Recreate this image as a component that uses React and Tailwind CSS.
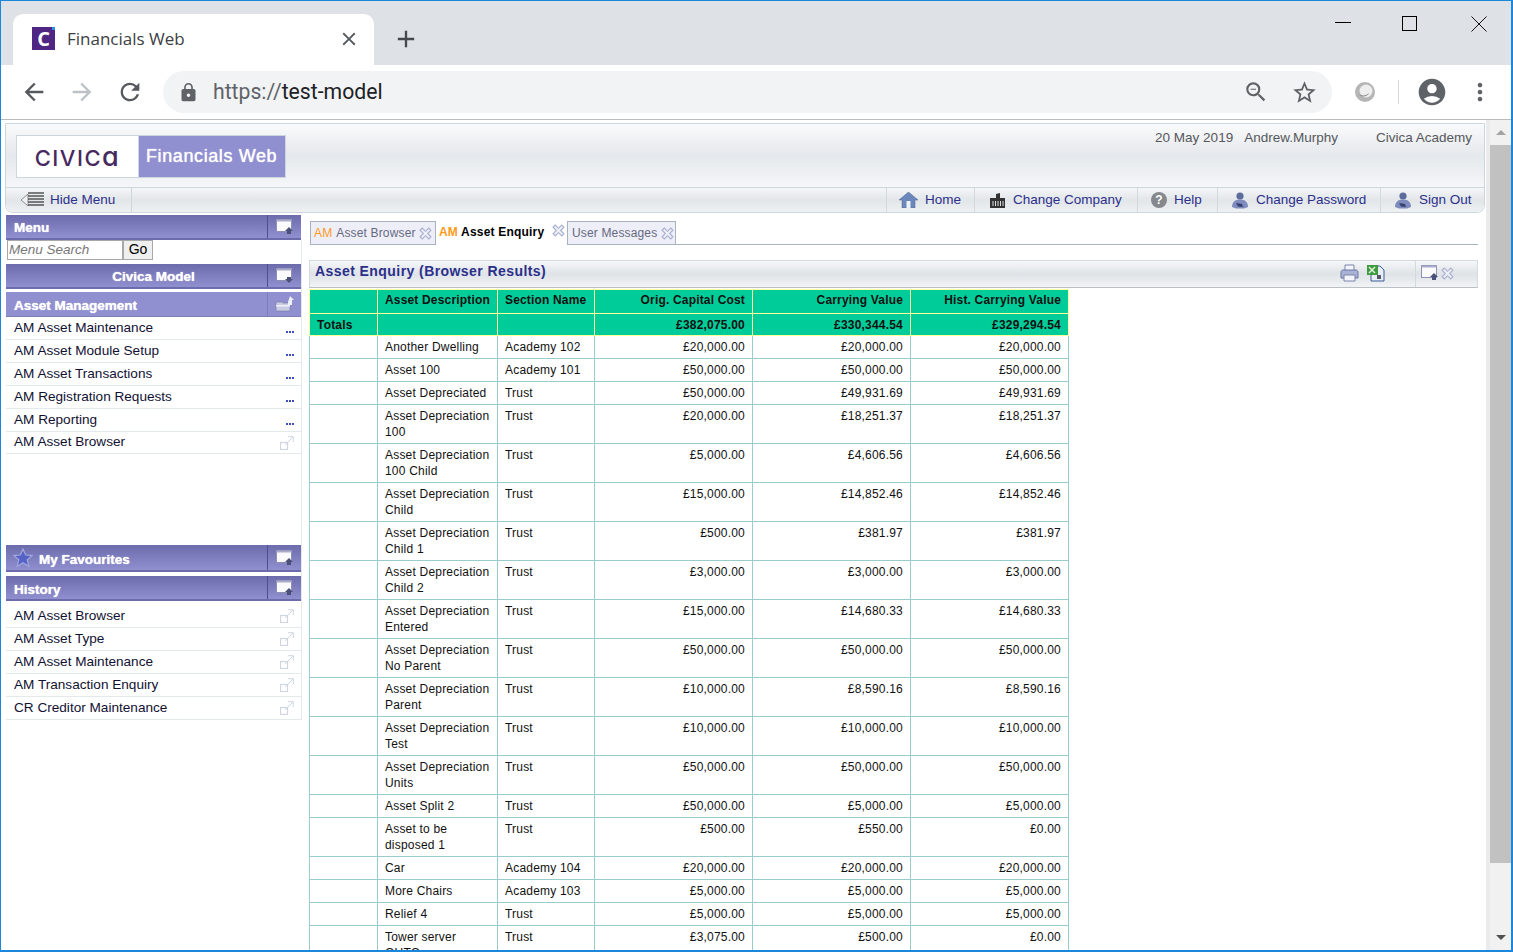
import { MdArrowBack, MdArrowForward, MdRefresh, MdLock, MdStarBorder, MdAccountCircle, MdMoreVert, MdZoomOut, MdClose, MdAdd } from "react-icons/md";

const rows = [
  ["Another Dwelling", "Academy 102", "£20,000.00", "£20,000.00", "£20,000.00"],
  ["Asset 100", "Academy 101", "£50,000.00", "£50,000.00", "£50,000.00"],
  ["Asset Depreciated", "Trust", "£50,000.00", "£49,931.69", "£49,931.69"],
  ["Asset Depreciation\n100", "Trust", "£20,000.00", "£18,251.37", "£18,251.37"],
  ["Asset Depreciation\n100 Child", "Trust", "£5,000.00", "£4,606.56", "£4,606.56"],
  ["Asset Depreciation\nChild", "Trust", "£15,000.00", "£14,852.46", "£14,852.46"],
  ["Asset Depreciation\nChild 1", "Trust", "£500.00", "£381.97", "£381.97"],
  ["Asset Depreciation\nChild 2", "Trust", "£3,000.00", "£3,000.00", "£3,000.00"],
  ["Asset Depreciation\nEntered", "Trust", "£15,000.00", "£14,680.33", "£14,680.33"],
  ["Asset Depreciation\nNo Parent", "Trust", "£50,000.00", "£50,000.00", "£50,000.00"],
  ["Asset Depreciation\nParent", "Trust", "£10,000.00", "£8,590.16", "£8,590.16"],
  ["Asset Depreciation\nTest", "Trust", "£10,000.00", "£10,000.00", "£10,000.00"],
  ["Asset Depreciation\nUnits", "Trust", "£50,000.00", "£50,000.00", "£50,000.00"],
  ["Asset Split 2", "Trust", "£50,000.00", "£5,000.00", "£5,000.00"],
  ["Asset to be\ndisposed 1", "Trust", "£500.00", "£550.00", "£0.00"],
  ["Car", "Academy 104", "£20,000.00", "£20,000.00", "£20,000.00"],
  ["More Chairs", "Academy 103", "£5,000.00", "£5,000.00", "£5,000.00"],
  ["Relief 4", "Trust", "£5,000.00", "£5,000.00", "£5,000.00"],
  ["Tower server\nOUTO", "Trust", "£3,075.00", "£500.00", "£0.00"],
];

const menuItems = ["AM Asset Maintenance", "AM Asset Module Setup", "AM Asset Transactions", "AM Registration Requests", "AM Reporting"];
const historyItems = ["AM Asset Browser", "AM Asset Type", "AM Asset Maintenance", "AM Transaction Enquiry", "CR Creditor Maintenance"];

function WindowIcon({ down }) {
  return (
    <svg width="18" height="16" viewBox="0 0 18 16">
      <rect x="0.5" y="0.5" width="15" height="12" fill="#fbfbfe" stroke="#8d90b4" />
      <rect x="0.5" y="0.5" width="15" height="2" fill="#a9abc8" />
      {down ? (
        <path d="M11 9h4v2h2l-4 4-4-4h2z" fill="#4a5078" />
      ) : (
        <path d="M13 8l4 4h-2v3h-4v-3H9z" fill="#4a5078" />
      )}
    </svg>
  );
}

function FolderUp() {
  return (
    <svg width="20" height="16" viewBox="0 0 20 16">
      <path d="M1 6h6l1 1h7v8H1z" fill="#c9cbe2" stroke="#7d80ad" strokeWidth="0.7" />
      <rect x="1" y="9" width="14" height="1.5" fill="#eef0f6" />
      <path d="M15 0l4 4h-2v5h-4V6z" fill="#eef0f8" />
    </svg>
  );
}

function LinkIcon() {
  return (
    <svg width="14" height="14" viewBox="0 0 14 14" fill="none" stroke="#cfd6e2" strokeWidth="1">
      <rect x="0.5" y="6.5" width="7" height="7" strokeWidth="1.2" />
      <path d="M5 9l8-8M8 0.7h5.3V6" />
    </svg>
  );
}

function Dots() {
  return (
    <div className="flex gap-[1px] mt-[8px]">
      <span className="w-[2px] h-[2px] bg-[#3f51c0]" />
      <span className="w-[2px] h-[2px] bg-[#3f51c0]" />
      <span className="w-[2px] h-[2px] bg-[#3f51c0]" />
    </div>
  );
}

function CrossIcon({ className }) {
  return (
    <svg width="13" height="13" viewBox="0 0 12 12" className={`shrink-0 ${className || ""}`}>
      <path d="M1 3l2-2 3 3 3-3 2 2-3 3 3 3-2 2-3-3-3 3-2-2 3-3z" fill="#eef0f8" stroke="#a9afcf" strokeWidth="1" />
    </svg>
  );
}

function PersonIcon() {
  return (
    <svg width="18" height="18" viewBox="0 0 18 18">
      <circle cx="9" cy="5" r="3.6" fill="#5d6a9c" />
      <path d="M1 16c0-5 3-7.5 8-7.5s8 2.5 8 7.5l-4 1.5H5z" fill="#7e8bbd" />
      <path d="M5 12l6 1 1 3-5-.5z" fill="#37406e" />
    </svg>
  );
}

function NavItem({ icon, label, width }) {
  return (
    <div className={`${width} h-full flex items-center gap-[7px] border-l border-[#d3dade] pl-[13px]`}>
      {icon}
      <span>{label}</span>
    </div>
  );
}

function BarHead({ label, icon, light, center, star, height, labelPad = "pt-[4px]" }) {
  return (
    <div className={`${height} flex text-white font-bold text-[13.5px] [text-shadow:0_0_1px_#ffffff] ${light ? "bg-[#9090d0] border-b border-[#7d7db8]" : "bg-gradient-to-b from-[#6c6cad] to-[#9090d0] border-b-2 border-[#6c6cad]"}`}>
      <div className={`w-[261px] flex items-center ${labelPad} ${center ? "justify-center pl-[34px]" : "pl-[8px]"}`}>
        {star && (
          <svg width="20" height="20" viewBox="0 0 20 20" className="mr-[6px] -ml-[1px] -mt-[6px]">
            <path d="M10 1l2.7 6 6.3.6-4.8 4.2 1.5 6.4L10 14.800l-5.700 3.400 1.500-6.400L1 7.600 7.300 7z" fill="#5562c8" stroke="#a4a8dc" strokeWidth="1.2" />
          </svg>
        )}
        {label}
      </div>
      <div className={`flex-1 flex items-center justify-center border-l ${light ? "border-[#7d7db8]" : "border-[#4d4d8f]"}`}>{icon}</div>
    </div>
  );
}

function MenuRow({ label, children, height }) {
  return (
    <div className={`${height} flex items-center justify-between pl-[8px] pr-[7px] border-b border-[#e4e9ec] text-[13.6px] text-[#111133]`}>
      <span>{label}</span>
      {children}
    </div>
  );
}

function DocTab({ code, label, active }) {
  return (
    <div className={`flex items-center gap-[3px] text-[12px] whitespace-nowrap ${active ? "h-[24px] w-[131px] bg-white pl-[3px] pb-[3px] text-black font-bold tracking-[0.2px]" : "h-[24px] border border-[#a9b1c2] bg-[#eeeef8] pl-[3px] text-[#666a80] tracking-[0.15px]"}`}>
      {code && <span className={`text-[#ff9a1a] ${active ? "" : "mr-[1px]"}`}>{code}</span>}
      <span className={active ? "mr-[5px]" : code ? "" : "ml-[1px] mr-[1px]"}>{label}</span>
      <CrossIcon className={active ? "-mt-[3px]" : ""} />
    </div>
  );
}

export default function App() {
  return (
    <div className="w-[1513px] h-[952px] overflow-hidden flex flex-col border-t border-l border-r-2 border-b-2 border-[#1a86dc] bg-white" style={{ fontFamily: '"Liberation Sans", Arial, sans-serif' }}>
      {/* browser tab strip */}
      <div className="h-[64px] shrink-0 bg-[#dee1e6] flex pl-[12px] pt-[13px]">
        <div className="w-[361px] h-[51px] bg-white rounded-t-[10px] flex items-center pl-[19px] pr-[14px] pb-[2px]" style={{ fontFamily: '"Open Sans", sans-serif' }}>
          <div className="relative w-[23px] h-[23px] bg-[#4f2683] flex items-center justify-center">
            <span className="text-white font-bold text-[20px] leading-none">C</span>
            <span className="absolute top-0 right-0 w-[3px] h-[3px] bg-[#2c8fe0]" />
          </div>
          <span className="ml-[12px] text-[17px] text-[#3c4043]">Financials Web</span>
          <MdClose className="ml-auto text-[#55585c]" size={22} />
        </div>
        <MdAdd className="ml-[18px] mt-[11px] text-[#45484c]" size={28} />
        <div className="ml-auto flex pt-[2px] pr-[24px]">
          <div className="w-[16px] h-[1px] bg-black mt-[6px]" />
          <div className="w-[15px] h-[15px] border border-black ml-[51px]" />
          <svg width="16" height="16" viewBox="0 0 16 16" className="ml-[54px]" stroke="#111" fill="none">
            <path d="M0.5 0.5l15 15M15.500 0.5l-15 15" />
          </svg>
        </div>
      </div>

      {/* browser toolbar */}
      <div className="h-[55px] shrink-0 bg-white border-b border-[#b8bcbf] flex items-center">
        <MdArrowBack className="ml-[19px] text-[#55585c]" size={28} />
        <MdArrowForward className="ml-[20px] text-[#bdc1c6]" size={28} />
        <MdRefresh className="ml-[20px] text-[#55585c]" size={28} />
        <div className="ml-[19px] w-[1169px] h-[42px] rounded-full bg-[#f1f3f4] flex items-center pl-[15px] pr-[14px]">
          <MdLock className="text-[#5f6368]" size={21} />
          <span className="ml-[14px] text-[21.2px] text-[#202124]" style={{ fontFamily: 'Roboto, sans-serif' }}>
            <span className="text-[#5f6368]">https://</span>test-model
          </span>
          <MdZoomOut className="ml-auto text-[#5f6368]" size={26} />
          <MdStarBorder className="ml-[22px] text-[#5f6368]" size={27} />
        </div>
        <svg width="22" height="22" viewBox="0 0 22 22" className="ml-[22px]">
          <circle cx="11" cy="11" r="10" fill="#b5b5b5" />
          <circle cx="12" cy="10" r="6.500" fill="#eeeeee" />
          <path d="M5 13c3 2 7 2 10-1-1 4-8 5-10 1z" fill="#8f8f8f" />
        </svg>
        <div className="w-[1px] h-[24px] bg-[#d5d7da] ml-[22px]" />
        <MdAccountCircle className="ml-[17px] text-[#5f6368]" size={32} />
        <MdMoreVert className="ml-[18px] text-[#5f6368]" size={28} />
      </div>

      {/* page */}
      <div className="flex-1 min-h-0 flex overflow-hidden">
        <div className="w-[1485px] shrink-0 pl-[4px] pt-[3px]">
          {/* app header */}
          <div className="h-[90px] w-[1480px] flex flex-col border border-[#cdd6dc] rounded-b-[8px]">
            <div className="h-[64px] shrink-0 flex justify-between pl-[10px] pt-[11px] pr-[12px] bg-gradient-to-b from-[#f9fafb] via-[#e5e8ec] to-[#f5f7f9] border-b border-[#cdd6dc]">
              <div className="flex h-[43px] border border-[#ced6dd]">
                <div className="w-[122px] bg-white flex items-center justify-center border-r border-[#ced6dd]">
                  <span className="text-[22px] font-medium leading-none text-[#46295f] tracking-[1.5px]" style={{ fontFamily: 'Inter, "DejaVu Sans", sans-serif' }}>CIVIC<span className="text-[27px]">ɑ</span></span>
                </div>
                <div className="w-[146px] bg-[#9090d0] flex items-center pl-[7px] text-white text-[18px] tracking-[0.6px] [text-shadow:0_0_1px_#ffffff]">Financials Web</div>
              </div>
              <div className="flex text-[13.5px] text-[#55585c] -mt-[7px]">
                <span>20 May 2019</span>
                <span className="ml-[11px]">Andrew.Murphy</span>
                <span className="ml-[38px]">Civica Academy</span>
              </div>
            </div>
            <div className="flex-1 flex items-center text-[13.5px] text-[#2b2f8a] bg-gradient-to-b from-[#f5f6f8] via-[#e2e6e9] to-[#eef0f2] rounded-b-[8px]">
              <div className="w-[126px] h-full flex items-center gap-[5px] pl-[14px] border-r border-[#cdd6dc]">
                <svg width="25" height="16" viewBox="0 0 25 16">
                  <path d="M1 8l7-6v12z" fill="#eef0f2" stroke="#8a8f94" />
                  <path d="M8 1h16M8 4h16M8 7h16M8 10h16M8 13h16" stroke="#555" strokeWidth="1.500" />
                </svg>
                <span>Hide Menu</span>
              </div>
              <div className="ml-auto flex h-full">
                <NavItem
                  width="w-[88px]"
                  label="Home"
                  icon={
                    <svg width="19" height="16" viewBox="0 0 19 16" className="-ml-[1px]">
                      <path d="M9.500 0L19 8h-3v8H3V8H0z" fill="#6b87bb" stroke="#4d6491" strokeWidth="0.5" />
                      <rect x="7.500" y="9" width="4" height="7" fill="#eef2f8" />
                    </svg>
                  }
                />
                <NavItem
                  width="w-[163px]"
                  label="Change Company"
                  icon={
                    <svg width="17" height="16" viewBox="0 0 17 16" className="ml-[1px]">
                      <path d="M1 6h6V2l4-1v5h5v10H1z" fill="#333" />
                      <path d="M4 9v5M6.500 9v5M9 9v5M11.500 9v5M14 9v5" stroke="#ddd" />
                    </svg>
                  }
                />
                <NavItem
                  width="w-[80px]"
                  label="Help"
                  icon={
                    <span className="w-[16px] h-[16px] rounded-full bg-[#85898d] text-white text-[12px] font-bold flex items-center justify-center">?</span>
                  }
                />
                <NavItem width="w-[163px]" label="Change Password" icon={<PersonIcon />} />
                <NavItem width="w-[104px]" label="Sign Out" icon={<PersonIcon />} />
              </div>
            </div>
          </div>

          <div className="flex">
            {/* side menu */}
            <div className="w-[298px] shrink-0 pl-[1px] pt-[2px]">
              <div className="w-[295px]">
                <BarHead label="Menu" height="h-[25px]" icon={<WindowIcon />} />
              </div>
              <div className="border-r border-[#e4e9ec] w-[296px]">
                <div className="flex h-[20px] pl-[1px]">
                  <div className="w-[116px] border border-[#a8a8a8] pl-[1px] text-[13.5px] leading-[17px] italic text-[#777]">Menu Search</div>
                  <div className="w-[30px] bg-[#efefef] border border-[#a8a8a8] text-[14px] leading-[17px] text-center text-black">Go</div>
                </div>
                <div className="pt-[4px]">
                  <BarHead label="Civica Model" center height="h-[25px]" icon={<WindowIcon down />} />
                </div>
                <div className="pt-[3px]">
                  <BarHead label="Asset Management" light height="h-[25px]" icon={<FolderUp />} />
                </div>
                {menuItems.map((m) => (
                  <MenuRow key={m} label={m} height="h-[23px]">
                    <Dots />
                  </MenuRow>
                ))}
                <MenuRow label="AM Asset Browser" height="h-[22px]">
                  <LinkIcon />
                </MenuRow>
                <div className="h-[91px]" />
                <BarHead label="My Favourites" star labelPad="pt-[6px]" height="h-[27px]" icon={<WindowIcon />} />
                <div className="pt-[4px]">
                  <BarHead label="History" labelPad="pt-[6px]" height="h-[25px]" icon={<WindowIcon />} />
                </div>
                <div className="h-[4px]" />
                {historyItems.map((m) => (
                  <MenuRow key={m} label={m} height="h-[23px]">
                    <LinkIcon />
                  </MenuRow>
                ))}
              </div>
            </div>

            {/* main content */}
            <div className="flex-1 pl-[6px] pt-[8px]">
              <div className="flex items-start h-[24px] border-b border-[#a9b1c2] w-[1168px] ml-[1px]">
                <div className="w-[126px]"><DocTab code="AM" label="Asset Browser" /></div>
                <DocTab code="AM" label="Asset Enquiry" active />
                <div className="w-[109px]"><DocTab label="User Messages" /></div>
              </div>
              <div className="mt-[15px] h-[28px] w-[1169px] flex items-center border border-[#d3dade] border-b-[#b8c0c6] bg-gradient-to-b from-[#f6f7f9] via-[#dfe3e7] to-[#f1f3f5] pl-[5px]">
                <span className="text-[14px] font-bold tracking-[0.43px] text-[#2b2f8a] pb-[6px]">Asset Enquiry (Browser Results)</span>
                <div className="ml-auto flex items-center gap-[7px] pr-[30px] pb-[2px]">
                  <svg width="19" height="18" viewBox="0 0 19 18">
                    <path d="M5 1h9v6H5z" fill="#f4f5fa" stroke="#7a84ad" />
                    <path d="M1 8c0-1 1-2 2-2h13c1 0 2 1 2 2v6H1z" fill="#aab2d4" stroke="#6d78a6" />
                    <path d="M4 11h11v6H4z" fill="#f4f5fa" stroke="#7a84ad" />
                  </svg>
                  <svg width="19" height="18" viewBox="0 0 19 18">
                    <path d="M5 2h9l4 4v11H5z" fill="#e8edf7" stroke="#3d5c98" />
                    <rect x="1" y="1" width="11" height="10" fill="#3f9a3f" />
                    <path d="M3 3l6 6M9 3l-6 6" stroke="#dff0d8" strokeWidth="1.500" />
                    <rect x="11" y="11" width="4" height="4" fill="#556" />
                  </svg>
                </div>
                <div className="w-[62px] h-full flex items-center gap-[2px] pl-[5px] border-l border-[#d3dade] pb-[2px]">
                  <WindowIcon />
                  <CrossIcon />
                </div>
              </div>

              <table className="mt-[1px] w-[759px] table-fixed border-collapse text-[12px] leading-[16px] tracking-[0.2px] text-[#111]">
                <colgroup>
                  <col className="w-[68px]" />
                  <col className="w-[120px]" />
                  <col className="w-[97px]" />
                  <col className="w-[158px]" />
                  <col className="w-[158px]" />
                  <col className="w-[158px]" />
                </colgroup>
                <thead>
                  <tr className="h-[24px] bg-[#00cc99] whitespace-nowrap tracking-[0.17px] [&>th]:border [&>th]:border-[#ffff99] [&>th]:font-bold [&>th]:px-[7px] [&>th]:pb-[3px]">
                    <th />
                    <th className="text-left">Asset Description</th>
                    <th className="text-left">Section Name</th>
                    <th className="text-right">Orig. Capital Cost</th>
                    <th className="text-right">Carrying Value</th>
                    <th className="text-right">Hist. Carrying Value</th>
                  </tr>
                  <tr className="h-[22px] bg-[#00cc99] whitespace-nowrap [&>th]:border [&>th]:border-[#ffff99] [&>th]:font-bold [&>th]:px-[7px]">
                    <th className="text-left">Totals</th>
                    <th />
                    <th />
                    <th className="text-right">£382,075.00</th>
                    <th className="text-right">£330,344.54</th>
                    <th className="text-right">£329,294.54</th>
                  </tr>
                </thead>
                <tbody>
                  {rows.map((r, i) => (
                    <tr key={i} className="[&>td]:border [&>td]:border-[#99cccc] [&>td]:align-top [&>td]:pl-[7px] [&>td]:pr-[7px] [&>td]:pt-[3px] [&>td]:pb-[3px]">
                      <td />
                      <td className="whitespace-pre">{r[0]}</td>
                      <td>{r[1]}</td>
                      <td className="text-right">{r[2]}</td>
                      <td className="text-right">{r[3]}</td>
                      <td className="text-right">{r[4]}</td>
                    </tr>
                  ))}
                </tbody>
              </table>
            </div>
          </div>
        </div>

        {/* scrollbar */}
        <div className="flex-1 flex">
          <div className="w-[4px] bg-[#e9ebed]" />
          <div className="flex-1 bg-[#f1f1f1] flex flex-col items-center pt-[10px] pb-[10px]">
            <div className="w-0 h-0 border-l-[5px] border-r-[5px] border-b-[5px] border-transparent border-b-[#a3a3a3]" />
            <div className="w-full h-[718px] bg-[#c1c1c1] mt-[10px]" />
            <div className="mt-auto w-0 h-0 border-l-[5px] border-r-[5px] border-t-[5px] border-transparent border-t-[#505050]" />
          </div>
        </div>
      </div>
    </div>
  );
}
